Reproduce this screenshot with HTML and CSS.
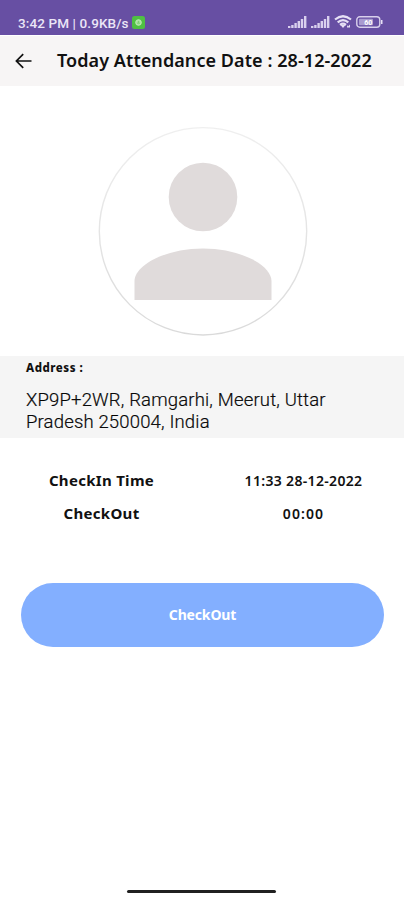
FILE: index.html
```html
<!DOCTYPE html>
<html lang="en">
<head>
<meta charset="utf-8">
<title>Today Attendance</title>
<link rel="stylesheet" href="styles.css">
</head>
<body>
<div class="status">
  <span class="status-text">3:42 PM | 0.9KB/s</span>
  <svg class="app-badge" viewBox="0 0 13 13"><rect width="13" height="13" rx="2.5" fill="#4fc043"/><circle cx="6.5" cy="6.5" r="2.8" fill="#a5e09b" stroke="#c0edb6" stroke-width="1"/><path d="M5 7.2h3M6.5 5v2" stroke="#7fd072"/></svg>
  <div class="status-icons">
    <svg width="19" height="13" viewBox="0 0 19 13" fill="#d9d0ee"><path d="M0 10h2.400v2H0zM3.200 9h2.400v3h-2.400zM6.400 7h2.400v5h-2.400zM9.600 5h2.400v7h-2.400zM12.800 3h2.400v9h-2.400zM16 0h2.400v12h-2.400z"/></svg>
    <svg width="19" height="13" viewBox="0 0 19 13" fill="#d9d0ee"><path d="M0 10h2.400v2H0zM3.200 9h2.400v3h-2.400zM6.400 7h2.400v5h-2.400zM9.600 5h2.400v7h-2.400zM12.800 3h2.400v9h-2.400zM16 0h2.400v12h-2.400z"/></svg>
    <svg width="18" height="14" viewBox="0 0 18 14" fill="none" stroke="#e6e0f5" stroke-width="2.2"><path d="M1 4.500Q9-2 17 4.500M3.700 7.300Q9 2.800 14.300 7.300M6 9.800Q9 7.400 12 9.800"/><path d="M6.500 10h5L9 13zM13 10l1 1.500 2-2v3h-3z" fill="#e6e0f5" stroke="none"/></svg>
    <svg width="27" height="12" viewBox="0 0 27 12"><rect x=".8" y=".8" width="23" height="10.400" rx="3" fill="none" stroke="#d8d0ec" stroke-width="1.400"/><rect x="3" y="2.800" width="14" height="6.400" rx="1" fill="#a99bd0"/><path d="M25 4h1.500v4H25z" fill="#e6e0f5"/><text class="battery-level" x="12.300" y="9" text-anchor="middle">60</text></svg>
  </div>
</div>
<header class="appbar">
  <svg class="back" viewBox="0 0 17 16" fill="none" stroke="#111" stroke-width="1.700"><path d="M16.500 8H1.600M8.200 1.200 1.400 8l6.800 6.800"/></svg>
  <h1>Today Attendance Date : 28-12-2022</h1>
</header>
<main>
  <svg class="avatar" viewBox="0 0 210 211"><defs><linearGradient id="ring" x2="0" y2="1"><stop offset="0" stop-color="#efefef"/><stop offset="1" stop-color="#dadada"/></linearGradient></defs><circle cx="105" cy="105.300" r="103.700" fill="#fff" stroke="url(#ring)" stroke-width="1.400"/><circle cx="105" cy="71" r="34.300" fill="#e0dbdb"/><path d="M36.500 174V155C36.500 140 66 122.500 105 122.500S173.500 140 173.500 155v19z" fill="#e0dbdb"/></svg>
  <section class="address">
    <h2>Address :</h2>
    <p>XP9P+2WR, Ramgarhi, Meerut, Uttar<br>Pradesh 250004, India</p>
  </section>
  <div class="times">
    <span class="label">CheckIn Time</span><span class="value">11:33 28-12-2022</span>
    <span class="label">CheckOut</span><span class="value zero">00:00</span>
  </div>
  <button class="checkout">CheckOut</button>
</main>
<div class="home-bar"></div>
</body>
</html>
```
FILE: styles.css
```css
* { box-sizing: border-box; }
body { margin: 0; height: 900px; display: flex; flex-direction: column; background: #fff; color: #111; font-family: "Noto Sans", sans-serif; overflow: hidden; }
.status { height: 35px; flex: none; display: flex; align-items: center; background: #674fa3; padding: 9px 21px 0 18px; }
.status-text { position: relative; top: 1px; font: 500 13.5px/16px Roboto, sans-serif; letter-spacing: .11px; color: #ebe6f7; white-space: nowrap; }
.app-badge { width: 13px; height: 13px; margin-left: 3px; }
.status-icons { margin-left: auto; display: flex; align-items: center; gap: 4px; }
.battery-level { font: 700 7px Roboto, sans-serif; fill: #fff; }
.appbar { height: 51px; flex: none; display: flex; align-items: center; background: #f7f5f5; border-top: 1px solid #fff; padding: 0 0 0 15px; }
.back { width: 17px; height: 16px; margin-right: 25px; }
h1 { margin: 0 0 2px; font-size: 18px; line-height: 24px; font-weight: 600; letter-spacing: .07px; white-space: nowrap; }
main { flex: 1; display: flex; flex-direction: column; }
.avatar { width: 210px; height: 211px; margin: 40px 0 0 97.5px; flex: none; }
.address { margin-top: 19px; height: 82px; background: #f5f5f5; padding: 5px 26px 0; }
h2 { margin: 0; font-size: 11.5px; line-height: 14px; font-weight: 800; letter-spacing: .5px; }
.address p { margin: 14px 0 0; font: 300 18.5px/22px Roboto, sans-serif; letter-spacing: .17px; color: #000; -webkit-text-stroke: .2px #222; white-space: nowrap; }
.times { margin-top: 25px; display: grid; grid-template-columns: 203px 201px; grid-auto-rows: 33px; align-items: center; text-align: center; }
.label { font-size: 15px; font-weight: 700; letter-spacing: .3px; }
.value { font-size: 14px; font-weight: 600; letter-spacing: .33px; padding-top: 1px; }
.zero { letter-spacing: 1.1px; }
.checkout { margin: 54px 20px 0 21px; height: 64px; border: 0; border-radius: 32px; background: #83afff; color: #fff; font: 700 14px "Noto Sans", sans-serif; letter-spacing: -.15px; padding: 0 0 2px; }
.home-bar { width: 149px; height: 3px; border-radius: 2px; background: #202020; margin: 0 0 7px 127px; flex: none; }
```
